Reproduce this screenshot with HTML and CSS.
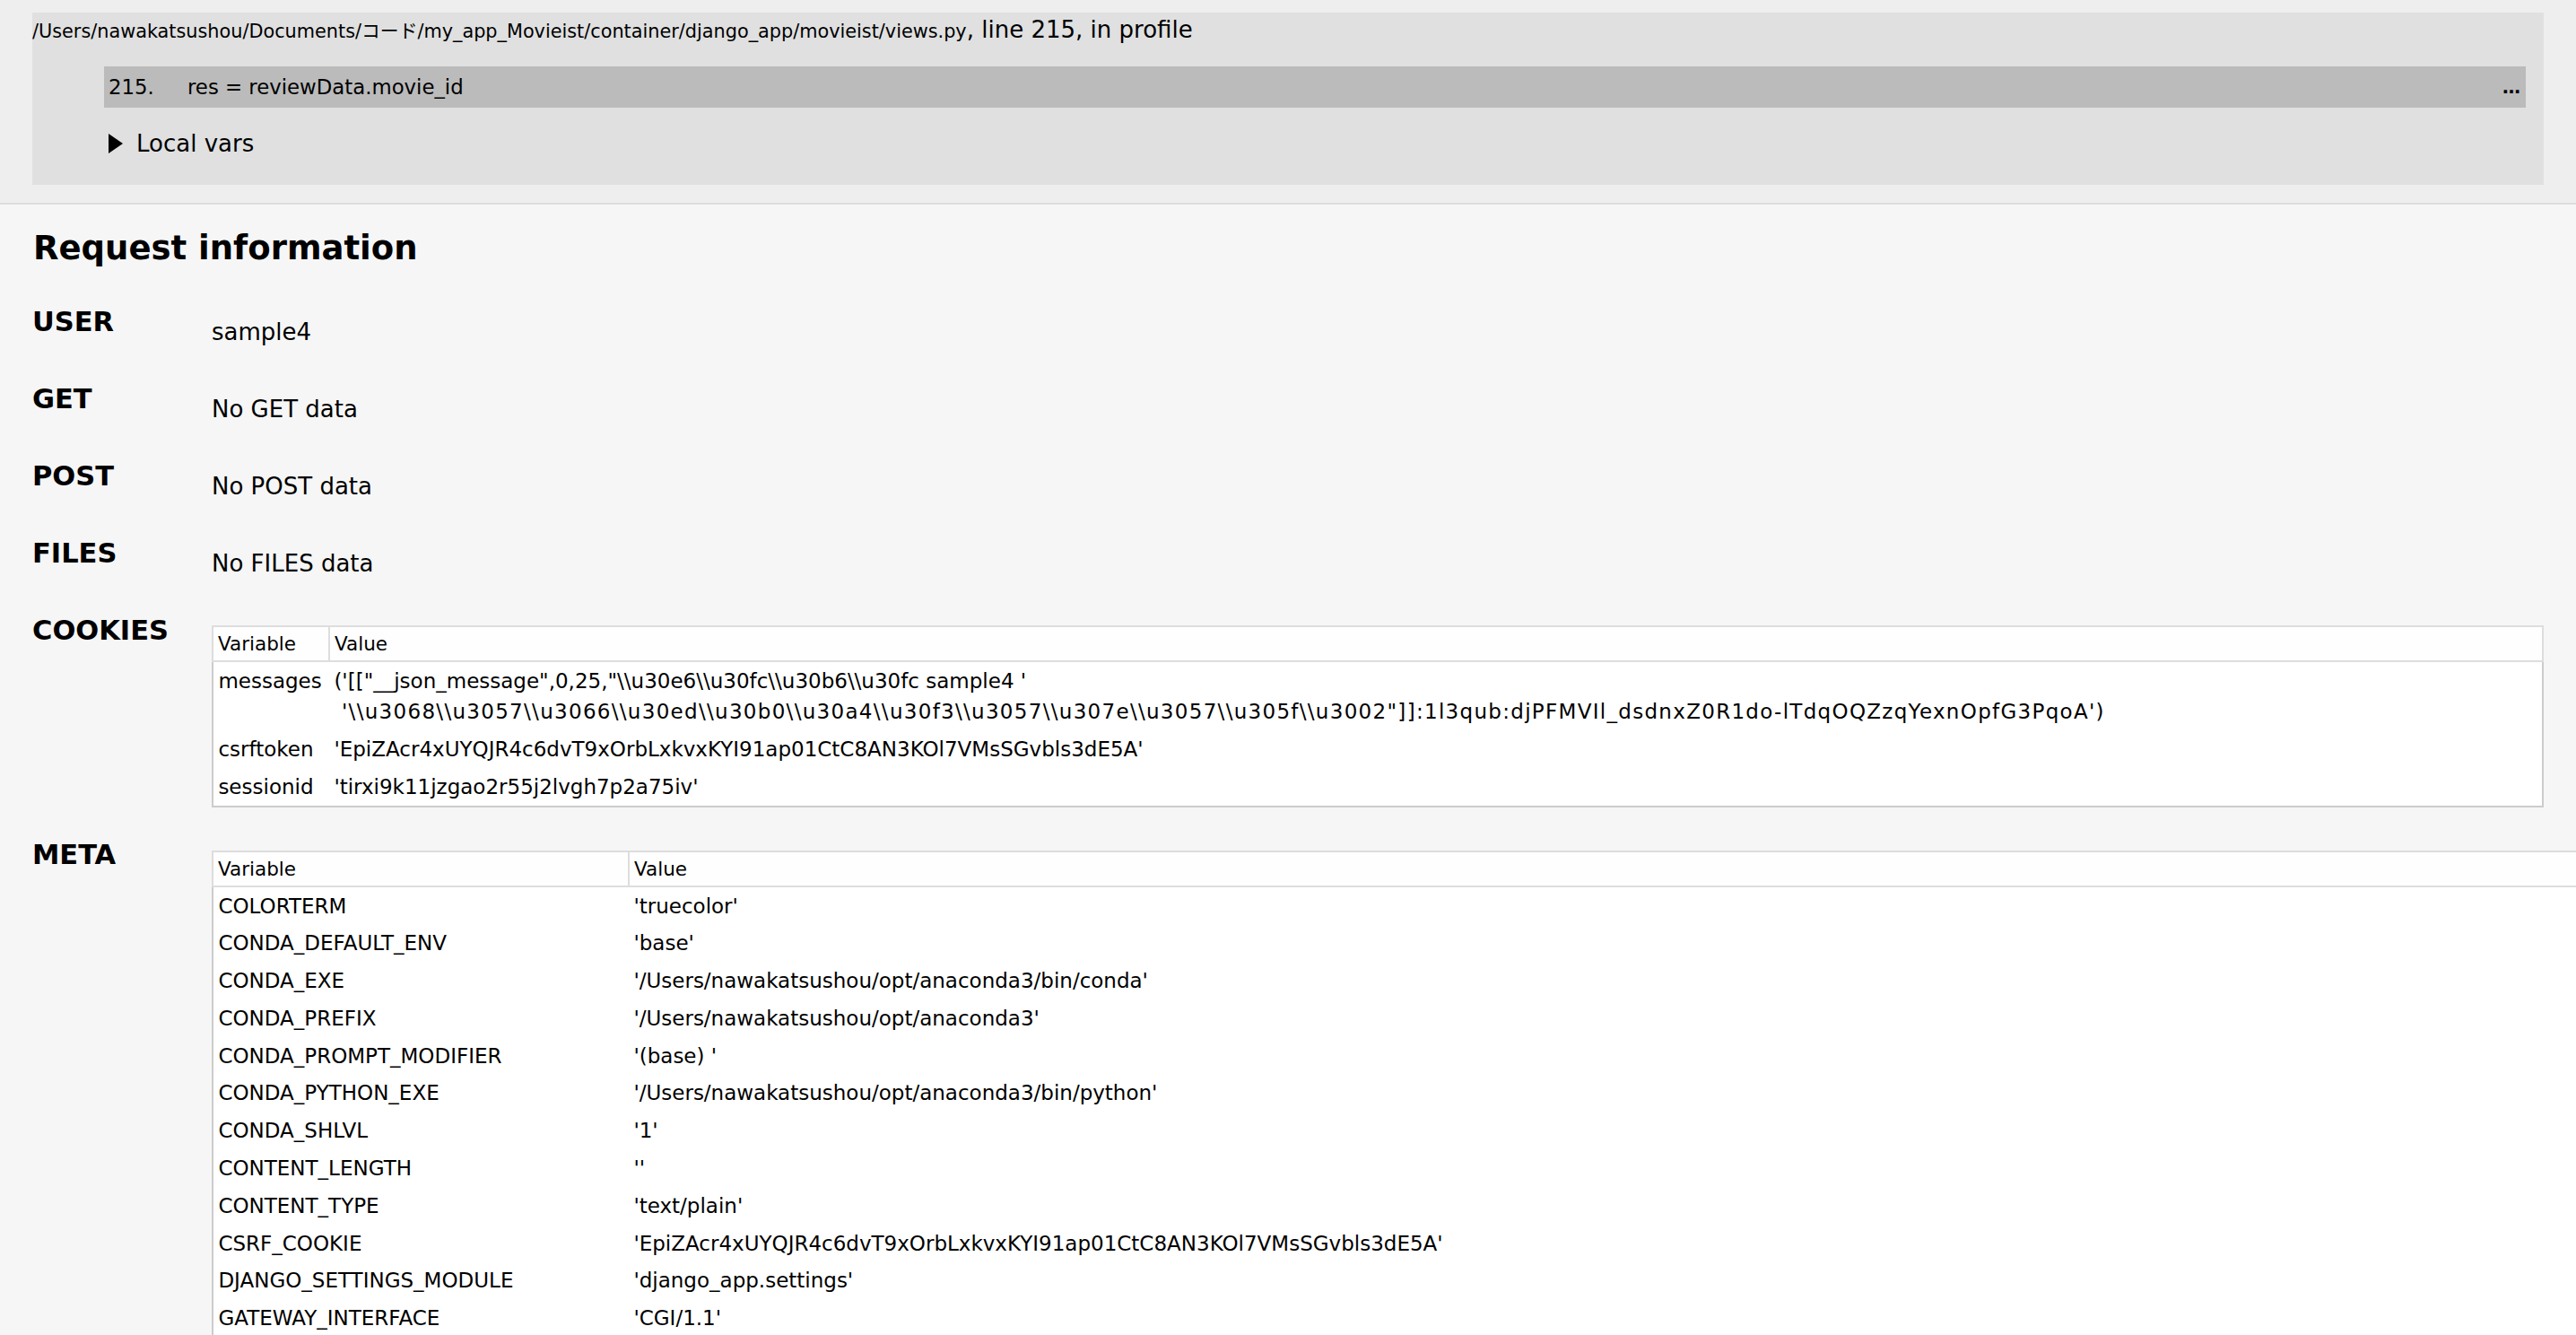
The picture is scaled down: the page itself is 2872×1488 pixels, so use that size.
FILE: index.html
```html
<!DOCTYPE html>
<html lang="ja">
<head>
<meta charset="utf-8">
<title>AttributeError at /profile</title>
<link rel="stylesheet" href="styles.css">
</head>
<body>
<div class="traceback">
  <div class="frame">
    <div class="frame-loc"><code class="fname">/Users/nawakatsushou/Documents/コード/my_app_Movieist/container/django_app/movieist/views.py</code>, line 215, in profile</div>
    <div class="context">
      <div class="context-line"><span class="lineno">215.</span><span class="src">res = reviewData.movie_id</span><span class="more">…</span></div>
    </div>
    <div class="local-vars">
      <svg class="tri" width="16" height="22" viewBox="0 0 16 22"><polygon points="0,0 16,11 0,22" fill="#000"/></svg>
      <span>Local vars</span>
    </div>
  </div>
</div>
<div class="requestinfo">
  <h2>Request information</h2>
  <div class="item"><h3>USER</h3><p class="val">sample4</p></div>
  <div class="item"><h3>GET</h3><p class="val">No GET data</p></div>
  <div class="item"><h3>POST</h3><p class="val">No POST data</p></div>
  <div class="item"><h3>FILES</h3><p class="val">No FILES data</p></div>
  <div class="item item-table">
    <h3>COOKIES</h3>
    <div class="tablewrap">
      <table class="req cookies">
        <colgroup><col class="c-key"><col></colgroup>
        <thead><tr><th>Variable</th><th>Value</th></tr></thead>
        <tbody>
          <tr><td>messages</td><td class="pre"><span class="ln">('[["__json_message",0,25,"\\u30e6\\u30fc\\u30b6\\u30fc sample4 '</span>
<span class="ln ln-wide"> '\\u3068\\u3057\\u3066\\u30ed\\u30b0\\u30a4\\u30f3\\u3057\\u307e\\u3057\\u305f\\u3002"]]:1l3qub:djPFMVIl_dsdnxZ0R1do-lTdqOQZzqYexnOpfG3PqoA')</span></td></tr>
          <tr><td>csrftoken</td><td>'EpiZAcr4xUYQJR4c6dvT9xOrbLxkvxKYI91ap01CtC8AN3KOl7VMsSGvbls3dE5A'</td></tr>
          <tr><td>sessionid</td><td>'tirxi9k11jzgao2r55j2lvgh7p2a75iv'</td></tr>
        </tbody>
      </table>
    </div>
  </div>
  <div class="item item-table">
    <h3>META</h3>
    <div class="tablewrap">
      <table class="req meta">
        <colgroup><col class="m-key"><col></colgroup>
        <thead><tr><th>Variable</th><th>Value</th></tr></thead>
        <tbody>
          <tr><td>COLORTERM</td><td>'truecolor'</td></tr>
          <tr><td>CONDA_DEFAULT_ENV</td><td>'base'</td></tr>
          <tr><td>CONDA_EXE</td><td>'/Users/nawakatsushou/opt/anaconda3/bin/conda'</td></tr>
          <tr><td>CONDA_PREFIX</td><td>'/Users/nawakatsushou/opt/anaconda3'</td></tr>
          <tr><td>CONDA_PROMPT_MODIFIER</td><td>'(base) '</td></tr>
          <tr><td>CONDA_PYTHON_EXE</td><td>'/Users/nawakatsushou/opt/anaconda3/bin/python'</td></tr>
          <tr><td>CONDA_SHLVL</td><td>'1'</td></tr>
          <tr><td>CONTENT_LENGTH</td><td>''</td></tr>
          <tr><td>CONTENT_TYPE</td><td>'text/plain'</td></tr>
          <tr><td>CSRF_COOKIE</td><td>'EpiZAcr4xUYQJR4c6dvT9xOrbLxkvxKYI91ap01CtC8AN3KOl7VMsSGvbls3dE5A'</td></tr>
          <tr><td>DJANGO_SETTINGS_MODULE</td><td>'django_app.settings'</td></tr>
          <tr><td>GATEWAY_INTERFACE</td><td>'CGI/1.1'</td></tr>
        </tbody>
      </table>
    </div>
  </div>
</div>
</body>
</html>
```

FILE: styles.css
```css
html, body {
  margin: 0;
  padding: 0;
  overflow: hidden;
}

body {
  width: 2872px;
  height: 1488px;
  font-family: "DejaVu Sans", "Noto Sans CJK JP", sans-serif;
  font-size: 26px;
  color: #000;
  background: #f6f6f6;
}

/* ---------- traceback ---------- */
.traceback {
  background: #eee;
  padding: 14px 36px 20px;
  border-bottom: 2px solid #ddd;
}

.frame {
  background: #e0e0e0;
  padding-bottom: 24px;
}

.frame-loc {
  height: 42px;
  line-height: 38px;
  white-space: nowrap;
}

.fname {
  font-family: "DejaVu Sans", "Noto Sans CJK JP", sans-serif;
  font-size: 20.8px;
}

.context {
  padding: 18px 20px 18px 80px;
}

.context-line {
  position: relative;
  display: flex;
  align-items: center;
  height: 46px;
  padding-left: 5px;
  background: #bbb;
  white-space: pre;
  font-size: 22.8px;
}

.lineno {
  width: 88px;
  flex: none;
}

.more {
  position: absolute;
  right: 6px;
  top: 50%;
  transform: translateY(-50%);
  font-size: 20px;
  font-weight: 700;
}

.local-vars {
  display: flex;
  align-items: center;
  gap: 15px;
  height: 44px;
  padding-left: 85px;
}

.tri {
  display: block;
  flex: none;
}

/* ---------- request information ---------- */
.requestinfo {
  background: #f6f6f6;
  padding: 24px 36px 0 36px;
}

.requestinfo h2 {
  margin: 0 0 37px 1px;
  font-size: 37px;
  line-height: 50px;
  font-weight: 700;
}

.item {
  display: flex;
  align-items: flex-start;
  margin-bottom: 35px;
}

.item-table {
  margin-bottom: 33px;
}

.item h3 {
  flex: none;
  width: 200px;
  margin: 0;
  font-size: 30.5px;
  line-height: 40px;
  font-weight: 700;
}

.item .val {
  margin: 11px 0 0;
  line-height: 40px;
}

.tablewrap {
  flex: 1;
  min-width: 0;
}

table.req {
  border-collapse: collapse;
  table-layout: fixed;
  background: #fff;
  border: 2px solid #ccc;
  margin-top: 14px;
}

table.cookies {
  width: 100%;
}

table.meta {
  width: 2800px;
  margin-top: 15px;
}

col.c-key {
  width: 130px;
}

col.m-key {
  width: 464px;
}

table.req thead th {
  padding: 2px 11px 2px 5px;
  background: #fefefe;
  text-align: left;
  font-weight: normal;
  font-size: 21.5px;
  line-height: 33px;
  border: 2px solid #ddd;
}

table.req tbody td {
  vertical-align: top;
  padding: 3.6px 5.4px;
  font-size: 23px;
  line-height: 34.6px;
  white-space: nowrap;
}

table.req tbody td.pre {
  white-space: pre;
}

.ln-wide {
  letter-spacing: 1.3px;
}
```
